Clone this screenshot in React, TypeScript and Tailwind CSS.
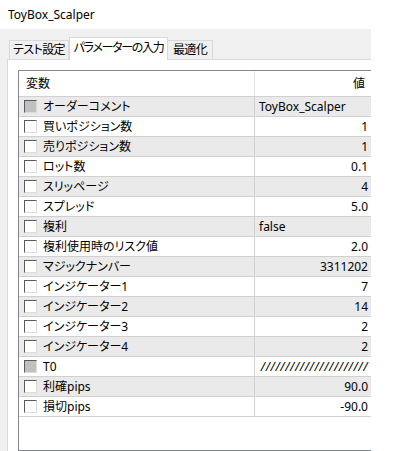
import React from "react";

type Row = { name: string; value: string; align?: "left" | "right"; filled?: boolean; italic?: boolean };

const rows: Row[] = [
  { name: "オーダーコメント", value: "ToyBox_Scalper", align: "left", filled: true },
  { name: "買いポジション数", value: "1" },
  { name: "売りポジション数", value: "1" },
  { name: "ロット数", value: "0.1" },
  { name: "スリッページ", value: "4" },
  { name: "スプレッド", value: "5.0" },
  { name: "複利", value: "false", align: "left" },
  { name: "複利使用時のリスク値", value: "2.0" },
  { name: "マジックナンバー", value: "3311202" },
  { name: "インジケーター1", value: "7" },
  { name: "インジケーター2", value: "14" },
  { name: "インジケーター3", value: "2" },
  { name: "インジケーター4", value: "2" },
  { name: "T0", value: "//////////////////////", filled: true, italic: true },
  { name: "利確pips", value: "90.0" },
  { name: "損切pips", value: "-90.0" },
];

function Checkbox({ filled }: { filled?: boolean }) {
  return (
    <span
      className={
        "block w-[13px] h-[13px] shrink-0 border border-t-[#5a5a5a] border-l-[#5a5a5a] border-r-[#dcdcdc] border-b-[#dcdcdc] " +
        (filled ? "bg-[#c0c0c0]" : "bg-white")
      }
    />
  );
}

export default function App() {
  return (
    <div
      className="w-[395px] h-[451px] bg-white text-[12px] text-black overflow-hidden [font-feature-settings:'palt']"
      style={{ fontFamily: '"Noto Sans", "Noto Sans CJK JP", sans-serif' }}
    >
      <div className="h-[29px] pl-2 flex items-center">ToyBox_Scalper</div>
      <div className="w-[371px] h-[422px] bg-[#f0f0f0] pl-[7px] pt-[8px] flex flex-col">
        <div className="flex items-end h-[22px] relative z-10 whitespace-nowrap tracking-[-0.6px]">
          <div className="ml-[2px] w-[60px] h-[19px] border border-b-0 border-[#d9d9d9] bg-[#f0f0f0] flex items-center justify-center">
            テスト設定
          </div>
          <div className="w-[99px] h-[23px] -mb-px border border-b-0 border-[#d9d9d9] bg-white flex items-center justify-center pb-[2px] tracking-[-1.3px]">
            パラメーターの入力
          </div>
          <div className="w-[45px] h-[19px] border border-b-0 border-l-0 border-[#d9d9d9] bg-[#f0f0f0] flex items-center justify-center">
            最適化
          </div>
        </div>
        <div className="flex-1 bg-white border border-r-0 border-b-0 border-[#d9d9d9] pt-[10px] pl-[10px]">
          <div className="h-full border border-r-0 border-[#828790] flex flex-col">
            <div className="flex h-[26px] border-b border-[#d0d0d0]">
              <div className="w-[235px] pl-[7px] flex items-center">変数</div>
              <div className="flex-1 border-l border-[#e5e5e5] flex items-center justify-end pr-[6px]">値</div>
            </div>
            {rows.map((r, i) => (
              <div
                key={r.name}
                className={"flex h-[20px] border-b border-[#d0d0d0] " + (i % 2 === 0 ? "bg-[#eaeaea]" : "bg-white")}
              >
                <div className="w-[235px] pl-[5px] flex items-center gap-[6px]">
                  <Checkbox filled={r.filled} />
                  <span className="whitespace-nowrap">{r.name}</span>
                </div>
                <div
                  className={
                    "flex-1 border-l border-[#d0d0d0] flex items-center whitespace-nowrap " +
                    (r.align === "left" ? "justify-start pl-[4px]" : "justify-end pr-[3px]") +
                    (r.italic ? " italic tracking-[0.6px]" : "")
                  }
                >
                  {r.value}
                </div>
              </div>
            ))}
          </div>
        </div>
      </div>
    </div>
  );
}
